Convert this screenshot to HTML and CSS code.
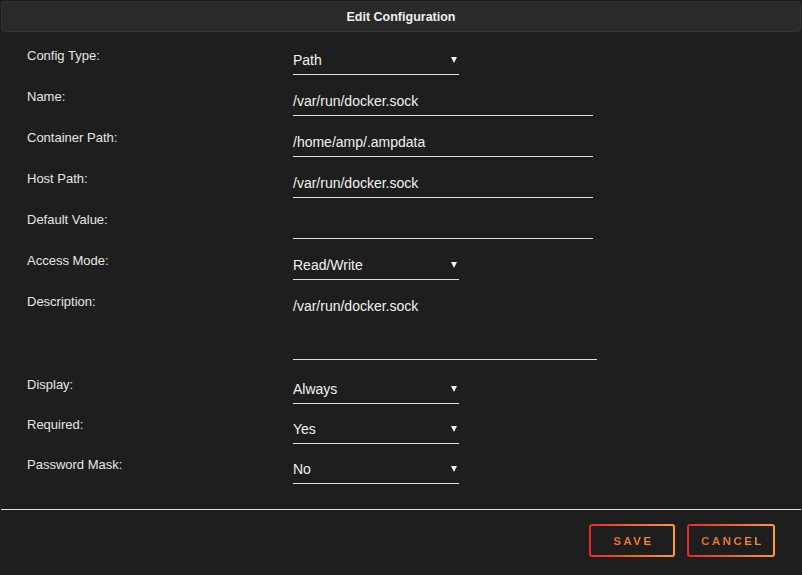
FILE: index.html
```html
<!DOCTYPE html>
<html>
<head>
  <meta charset="UTF-8">
  <title>Edit Configuration</title>
  <link rel="stylesheet" href="styles.css">
</head>
<body>
  <div class="dialog">
    <div class="dialog-header">Edit Configuration</div>

    <div class="form">
      <div class="row">
        <label class="row-label">Config Type:</label>
        <div class="field select"><span>Path</span><i class="caret"></i></div>
      </div>
      <div class="row">
        <label class="row-label">Name:</label>
        <div class="field text">/var/run/docker.sock</div>
      </div>
      <div class="row">
        <label class="row-label">Container Path:</label>
        <div class="field text">/home/amp/.ampdata</div>
      </div>
      <div class="row">
        <label class="row-label">Host Path:</label>
        <div class="field text">/var/run/docker.sock</div>
      </div>
      <div class="row">
        <label class="row-label">Default Value:</label>
        <div class="field text"></div>
      </div>
      <div class="row">
        <label class="row-label">Access Mode:</label>
        <div class="field select"><span>Read/Write</span><i class="caret"></i></div>
      </div>
      <div class="row row-tall">
        <label class="row-label">Description:</label>
        <div class="field textarea">/var/run/docker.sock</div>
      </div>
      <div class="row row-tight">
        <label class="row-label">Display:</label>
        <div class="field select"><span>Always</span><i class="caret"></i></div>
      </div>
      <div class="row row-tight">
        <label class="row-label">Required:</label>
        <div class="field select"><span>Yes</span><i class="caret"></i></div>
      </div>
      <div class="row row-tight">
        <label class="row-label">Password Mask:</label>
        <div class="field select"><span>No</span><i class="caret"></i></div>
      </div>
    </div>

    <div class="dialog-footer">
      <button class="btn"><span>SAVE</span></button>
      <button class="btn btn-wide"><span>CANCEL</span></button>
    </div>
  </div>
</body>
</html>
```

FILE: styles.css
```css
body {
  margin: 0;
  background-color: #1e1e1e;
  color: #e8e8e8;
  font-family: 'Liberation Sans', Arial, sans-serif;
}

.dialog {
  width: 802px;
  height: 575px;
  box-sizing: border-box;
  padding-top: 1px;
}

.dialog-header {
  margin: 0 1px;
  height: 31px;
  box-sizing: border-box;
  padding-top: 1px;
  background: #2a2a2a;
  border: 1px solid #333;
  border-radius: 4px;
  display: flex;
  align-items: center;
  justify-content: center;
  font-size: 12.5px;
  font-weight: bold;
  color: #f0f0f0;
}

.form {
  padding: 15px 0 0 27px;
}

.row {
  display: grid;
  grid-template-columns: 266px auto;
  margin-bottom: 13px;
}

.row-tall {
  margin-bottom: 16px;
}

.row-tight {
  margin-bottom: 12px;
}

.row-label {
  padding-top: 1px;
  font-size: 13px;
  line-height: 16px;
  color: #e6e6e6;
}

.field {
  box-sizing: border-box;
  height: 28px;
  padding-top: 5px;
  font-size: 14px;
  line-height: 16px;
  color: #f2f2f2;
  border-bottom: 1px solid #e0e0e0;
}

.field.text {
  width: 300px;
}

.field.textarea {
  width: 304px;
  height: 67px;
}

.field.select {
  width: 166px;
  display: flex;
  justify-content: space-between;
  align-items: flex-start;
  padding-right: 2px;
}

.caret {
  width: 0;
  height: 0;
  margin-top: 5px;
  border-left: 3px solid transparent;
  border-right: 3px solid transparent;
  border-top: 6px solid #f2f2f2;
}

.dialog-footer {
  margin: 25px 1px 0;
  border-top: 1px solid #e0e0e0;
  padding: 14px 26px 0 0;
  display: flex;
  justify-content: flex-end;
  gap: 12px;
}

.btn {
  width: 86px;
  height: 33px;
  border: 2px solid transparent;
  border-radius: 3px;
  background: linear-gradient(#1e1e1e, #1e1e1e) padding-box,
              linear-gradient(90deg, #e42a26, #ff9a38) border-box;
  font-family: 'Liberation Sans', Arial, sans-serif;
  font-size: 11.5px;
  font-weight: bold;
  letter-spacing: 2.4px;
  padding: 0 0 0 3px;
  cursor: pointer;
}

.btn span {
  background: linear-gradient(90deg, #f46a2c, #ff8a32);
  -webkit-background-clip: text;
  background-clip: text;
  color: transparent;
}

.btn-wide {
  width: 88px;
}
```
